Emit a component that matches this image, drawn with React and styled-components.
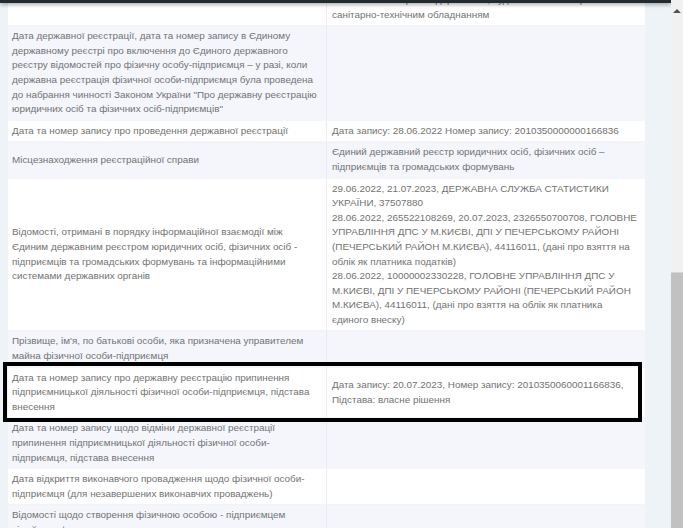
import React from 'react';
import styled, { createGlobalStyle } from 'styled-components';

const GlobalStyle = createGlobalStyle`
  html, body {
    margin: 0;
    padding: 0;
    height: 100%;
    overflow: hidden;
    background: #eef3f7;
  }
  #root { height: 100%; }
`;

const rows = [
  ['', '46.73 Оптова торгівля деревиною, будівельними матеріалами та санітарно-технічним обладнанням'],
  ['Дата державної реєстрації, дата та номер запису в Єдиному державному реєстрі про включення до Єдиного державного реєстру відомостей про фізичну особу-підприємця – у разі, коли державна реєстрація фізичної особи-підприємця була проведена до набрання чинності Законом України "Про державну реєстрацію юридичних осіб та фізичних осіб-підприємців"', ''],
  ['Дата та номер запису про проведення державної реєстрації', 'Дата запису: 28.06.2022 Номер запису: 2010350000000166836'],
  ['Місцезнаходження реєстраційної справи', 'Єдиний державний реєстр юридичних осіб, фізичних осіб – підприємців та громадських формувань'],
  [
    'Відомості, отримані в порядку інформаційної взаємодії між Єдиним державним реєстром юридичних осіб, фізичних осіб - підприємців та громадських формувань та інформаційними системами державних органів',
    [
      '29.06.2022, 21.07.2023, ДЕРЖАВНА СЛУЖБА СТАТИСТИКИ УКРАЇНИ, 37507880',
      '28.06.2022, 265522108269, 20.07.2023, 2326550700708, ГОЛОВНЕ УПРАВЛІННЯ ДПС У М.КИЄВІ, ДПІ У ПЕЧЕРСЬКОМУ РАЙОНІ (ПЕЧЕРСЬКИЙ РАЙОН М.КИЄВА), 44116011, (дані про взяття на облік як платника податків)',
      '28.06.2022, 10000002330228, ГОЛОВНЕ УПРАВЛІННЯ ДПС У М.КИЄВІ, ДПІ У ПЕЧЕРСЬКОМУ РАЙОНІ (ПЕЧЕРСЬКИЙ РАЙОН М.КИЄВА), 44116011, (дані про взяття на облік як платника єдиного внеску)',
    ],
  ],
  ['Прізвище, ім\'я, по батькові особи, яка призначена управителем майна фізичної особи-підприємця', ''],
  ['Дата та номер запису про державну реєстрацію припинення підприємницької діяльності фізичної особи-підприємця, підстава внесення', 'Дата запису: 20.07.2023, Номер запису: 2010350060001166836, Підстава: власне рішення', true],
  ['Дата та номер запису щодо відміни державної реєстрації припинення підприємницької діяльності фізичної особи-підприємця, підстава внесення', ''],
  ['Дата відкриття виконавчого провадження щодо фізичної особи-підприємця (для незавершених виконавчих проваджень)', ''],
  ['Відомості щодо створення фізичною особою - підприємцем сімейного фермерського господарства', ''],
];

export default function App() {
  return (
    <Page>
      <GlobalStyle />
      <Viewport>
        <TopBar />
        <Table>
          {rows.map(([label, value, marked], i) => (
            <Row key={i} $alt={i % 2 === 1} $marked={marked}>
              <Label>{label}</Label>
              <Value>
                {Array.isArray(value)
                  ? value.map((line, j) => <div key={j}>{line}</div>)
                  : value}
              </Value>
            </Row>
          ))}
        </Table>
      </Viewport>
      <Scrollbar>
        <Arrow />
        <Thumb />
      </Scrollbar>
    </Page>
  );
}

const Page = styled.div`
  display: flex;
  height: 528px;
  width: 683px;
  overflow: hidden;
`;

const Viewport = styled.div`
  position: relative;
  flex: 1;
  overflow: hidden;
  background: #eef3f7;
  padding-left: 8px;
`;

const TopBar = styled.div`
  position: absolute;
  top: 0;
  left: 0;
  right: 0;
  height: 3px;
  background: #222c30;
  box-shadow: 0 1px 4px rgba(20, 30, 35, 0.55);
  z-index: 3;
`;

const Table = styled.div`
  width: 637px;
  margin-top: -10px;
  font-family: "Liberation Sans", Arial, sans-serif;
  font-size: 9.9px;
  line-height: 14.6px;
  color: #727272;
`;

const Row = styled.div`
  position: relative;
  display: grid;
  grid-template-columns: 319px 318px;
  align-items: stretch;
  background: ${(p) => (p.$alt ? '#f4f6fc' : '#ffffff')};
  border-bottom: 1px solid ${(p) => (p.$alt ? '#f4f6fc' : '#f1f3f8')};

  ${(p) =>
    p.$marked &&
    `
    z-index: 2;
    &::after {
      content: '';
      position: absolute;
      left: -5px;
      right: 3px;
      top: -6px;
      bottom: -5px;
      border: 4px solid #000;
      pointer-events: none;
    }
  `}
`;

const Cell = styled.div`
  padding: 3px 5px 3px 4px;
  display: flex;
  flex-direction: column;
  justify-content: center;
`;

const Label = styled(Cell)`
  border-right: 1px solid #e9edf3;
`;

const Value = styled(Cell)`
  padding-left: 5px;
`;

const Scrollbar = styled.div`
  position: relative;
  width: 12px;
  background: #f1f1f1;
  display: flex;
  flex-direction: column;
  align-items: center;
`;

const Arrow = styled.div`
  margin-top: 9px;
  width: 0;
  height: 0;
  border-left: 4px solid transparent;
  border-right: 4px solid transparent;
  border-bottom: 4px solid #505050;
`;

const Thumb = styled.div`
  margin-top: auto;
  width: 12px;
  height: 255px;
  background: #c1c1c1;
  border-top: 1px solid #d6d6d6;
`;
